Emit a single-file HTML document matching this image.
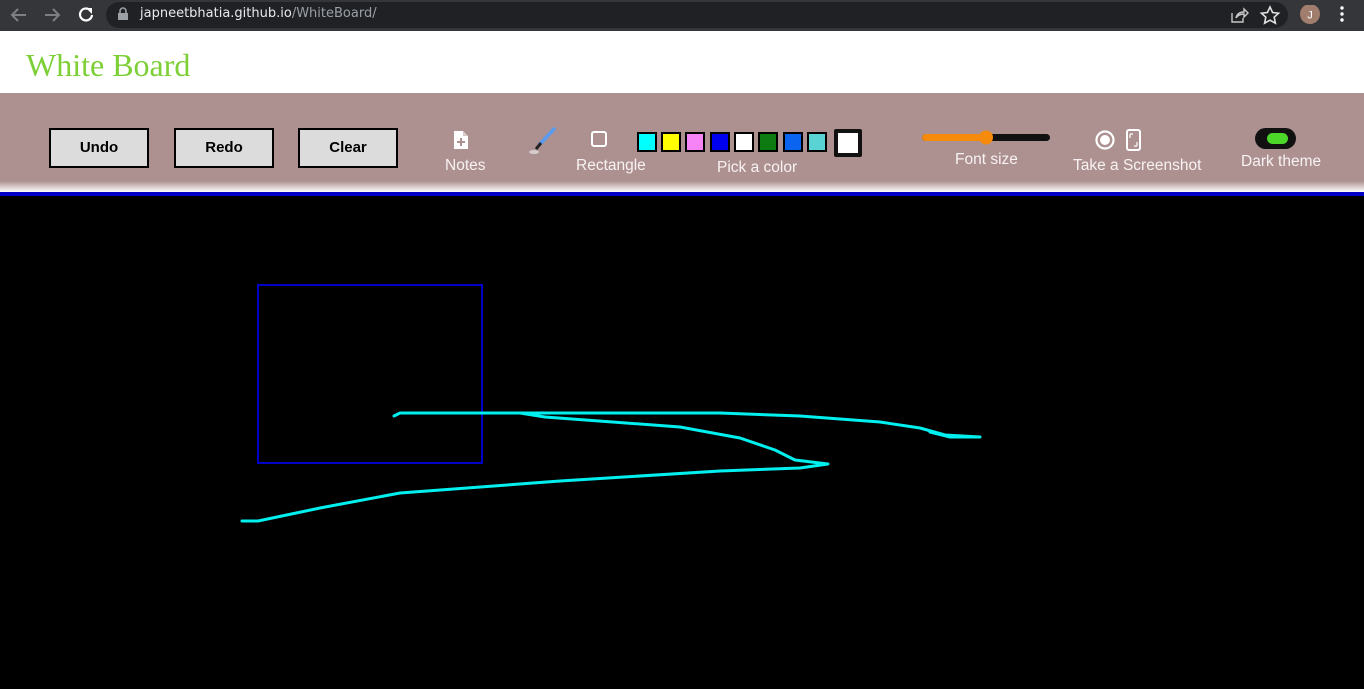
<!DOCTYPE html>
<html><head><meta charset="utf-8">
<style>
*{margin:0;padding:0;box-sizing:border-box}
body{width:1364px;height:689px;overflow:hidden;background:#000;font-family:"Liberation Sans",sans-serif;position:relative}
.chrome{position:absolute;left:0;top:0;width:1364px;height:31px;background:#35363a}
.omni{position:absolute;left:106px;top:2px;width:1182px;height:26px;border-radius:13px;background:#202124}
.url{position:absolute;left:140px;top:6px;color:#e8eaed;font-family:"DejaVu Sans","Liberation Sans",sans-serif;font-size:13px}
.url span{color:#9aa0a6}
.header{position:absolute;left:0;top:31px;width:1364px;height:62px;background:#fff}
.title{position:absolute;left:26px;top:47px;font-family:"Liberation Serif",serif;font-size:32px;color:#7ccf35}
.bar{position:absolute;left:0;top:93px;width:1364px;height:100px;background:linear-gradient(#ad9191 0,#ad9191 88px,#f0eaea 97px,#fff 99px)}
.blue{position:absolute;left:0;top:192px;width:1364px;height:4px;background:#0000c8}
.btn{position:absolute;top:128px;width:100px;height:40px;background:#dcdcdc;border:2px solid #000;font-weight:bold;font-size:15px;text-align:center;line-height:36px;color:#000}
.lbl{position:absolute;color:#f8f2f2;font-family:"Liberation Sans",sans-serif;font-size:15.5px;white-space:nowrap}
.sw{position:absolute;top:132px;width:20px;height:20px;border:2px solid #000}
</style></head><body>
<div class="chrome">
<svg style="position:absolute;left:0;top:0" width="110" height="31">
<path d="M26 15H13M18 9l-6 6 6 6" stroke="#7d7f83" stroke-width="2" fill="none"/>
<path d="M45 15h13M53 9l6 6-6 6" stroke="#7d7f83" stroke-width="2" fill="none"/>
<path d="M90 10a6 6 0 1 0 2 5" stroke="#fff" stroke-width="2.2" fill="none"/><path d="M86 8h6v6z" fill="#fff"/>
</svg>
<div class="omni"></div>
<svg style="position:absolute;left:117px;top:7px" width="12" height="14"><rect x="1" y="6" width="10" height="7" fill="#9aa0a6"/><path d="M3 6V4a3 3 0 0 1 6 0v2" stroke="#9aa0a6" stroke-width="1.6" fill="none"/></svg>
<div class="url">japneetbhatia.github.io<span>/WhiteBoard/</span></div>
<svg style="position:absolute;left:1228px;top:5px" width="130" height="22">
<path d="M4 8v9h11v-4M8 13c1-4 4-6 8-6V4l4 4-4 4V9c-3 0-6 1-8 4z" stroke="#c8c8c8" stroke-width="1.4" fill="none"/>
<path d="M42 2l2.6 5.5 6 .7-4.4 4 1.2 6-5.4-3-5.4 3 1.2-6-4.4-4 6-.7z" stroke="#e0e0e0" stroke-width="1.6" fill="none"/>
<circle cx="82" cy="9" r="10" fill="#a17d6e"/><text x="82" y="13.5" font-size="11" fill="#fff" text-anchor="middle" font-family="Liberation Sans">J</text>
<circle cx="114" cy="3" r="1.7" fill="#fff"/><circle cx="114" cy="9" r="1.7" fill="#fff"/><circle cx="114" cy="15" r="1.7" fill="#fff"/>
</svg>
</div>
<div class="header"></div>
<div class="title">White Board</div>
<div class="bar"></div>
<div class="blue"></div>
<div class="btn" style="left:49px">Undo</div>
<div class="btn" style="left:174px">Redo</div>
<div class="btn" style="left:298px">Clear</div>
<svg style="position:absolute;left:452px;top:130px" width="18" height="20"><path d="M2 1h9l5 5v13H2z" fill="#fff"/><path d="M11 1v5h5" fill="#d9c9c9"/><path d="M9 8v8M5 12h8" stroke="#ad9191" stroke-width="2"/></svg>
<div class="lbl" style="left:445px;top:157px">Notes</div>
<svg style="position:absolute;left:527px;top:127px" width="30" height="28"><path d="M27 2L13 17" stroke="#5a9bef" stroke-width="3.5" stroke-linecap="round"/><path d="M14 16l-5 6" stroke="#222" stroke-width="3"/><ellipse cx="7" cy="25" rx="5" ry="2" fill="#ddd" opacity=".8"/></svg>
<svg style="position:absolute;left:590px;top:130px" width="20" height="20"><rect x="2" y="2" width="14" height="14" rx="2" stroke="#fff" stroke-width="2" fill="none"/></svg>
<div class="lbl" style="left:576px;top:157px">Rectangle</div>
<div class="sw" style="left:637px;background:#0ff"></div>
<div class="sw" style="left:661px;background:#ff0"></div>
<div class="sw" style="left:685px;background:#f784f7"></div>
<div class="sw" style="left:710px;background:#0000f0"></div>
<div class="sw" style="left:734px;background:#fff"></div>
<div class="sw" style="left:758px;background:#0e7a12"></div>
<div class="sw" style="left:783px;background:#0a64f0"></div>
<div class="sw" style="left:807px;background:#59d3d3"></div>
<div style="position:absolute;left:834px;top:129px;width:28px;height:28px;background:#fff;border:4px solid #111;border-radius:2px"></div>
<div class="lbl" style="left:717px;top:159px">Pick a color</div>
<svg style="position:absolute;left:918px;top:128px" width="136" height="20"><rect x="4" y="6" width="128" height="7" rx="3.5" fill="#111"/><rect x="4" y="6" width="66" height="7" rx="3.5" fill="#f58a0b"/><circle cx="68" cy="9.5" r="7" fill="#f58a0b"/></svg>
<div class="lbl" style="left:955px;top:151px">Font size</div>
<svg style="position:absolute;left:1094px;top:128px" width="50" height="24"><circle cx="11" cy="12" r="8.5" stroke="#fff" stroke-width="2.2" fill="none"/><circle cx="11" cy="12" r="5" fill="#fff"/><rect x="33" y="2" width="13" height="20" rx="2" stroke="#fff" stroke-width="2" fill="none"/><path d="M36 6v4M43 18v-4M36 6h3M43 18h-3" stroke="#fff" stroke-width="1.2"/></svg>
<div class="lbl" style="left:1073px;top:157px">Take a Screenshot</div>
<div style="position:absolute;left:1255px;top:128px;width:41px;height:21px;border-radius:11px;background:#111"></div>
<div style="position:absolute;left:1267px;top:133px;width:21px;height:11px;border-radius:6px;background:#4cd62a"></div>
<div class="lbl" style="left:1241px;top:153px">Dark theme</div>
<svg style="position:absolute;left:0;top:196px" width="1364" height="493">
<rect x="258" y="89" width="224" height="178" stroke="#0000c8" stroke-width="2" fill="none"/>
<g stroke="#00f0f0" stroke-width="3" fill="none" stroke-linejoin="round" stroke-linecap="round">
<path d="M394 220 L400 217 L540 217 L720 217 L800 220 L880 226 L920 232 L945 239 L980 241 L950 241 L930 236"/>
<path d="M520 217 L545 221 L680 231 L740 242 L775 254 L795 264 L828 268 L800 272 L720 275 L560 285 L400 297 L320 312 L258 325 L242 325"/>
</g>
</svg>
</body></html>
